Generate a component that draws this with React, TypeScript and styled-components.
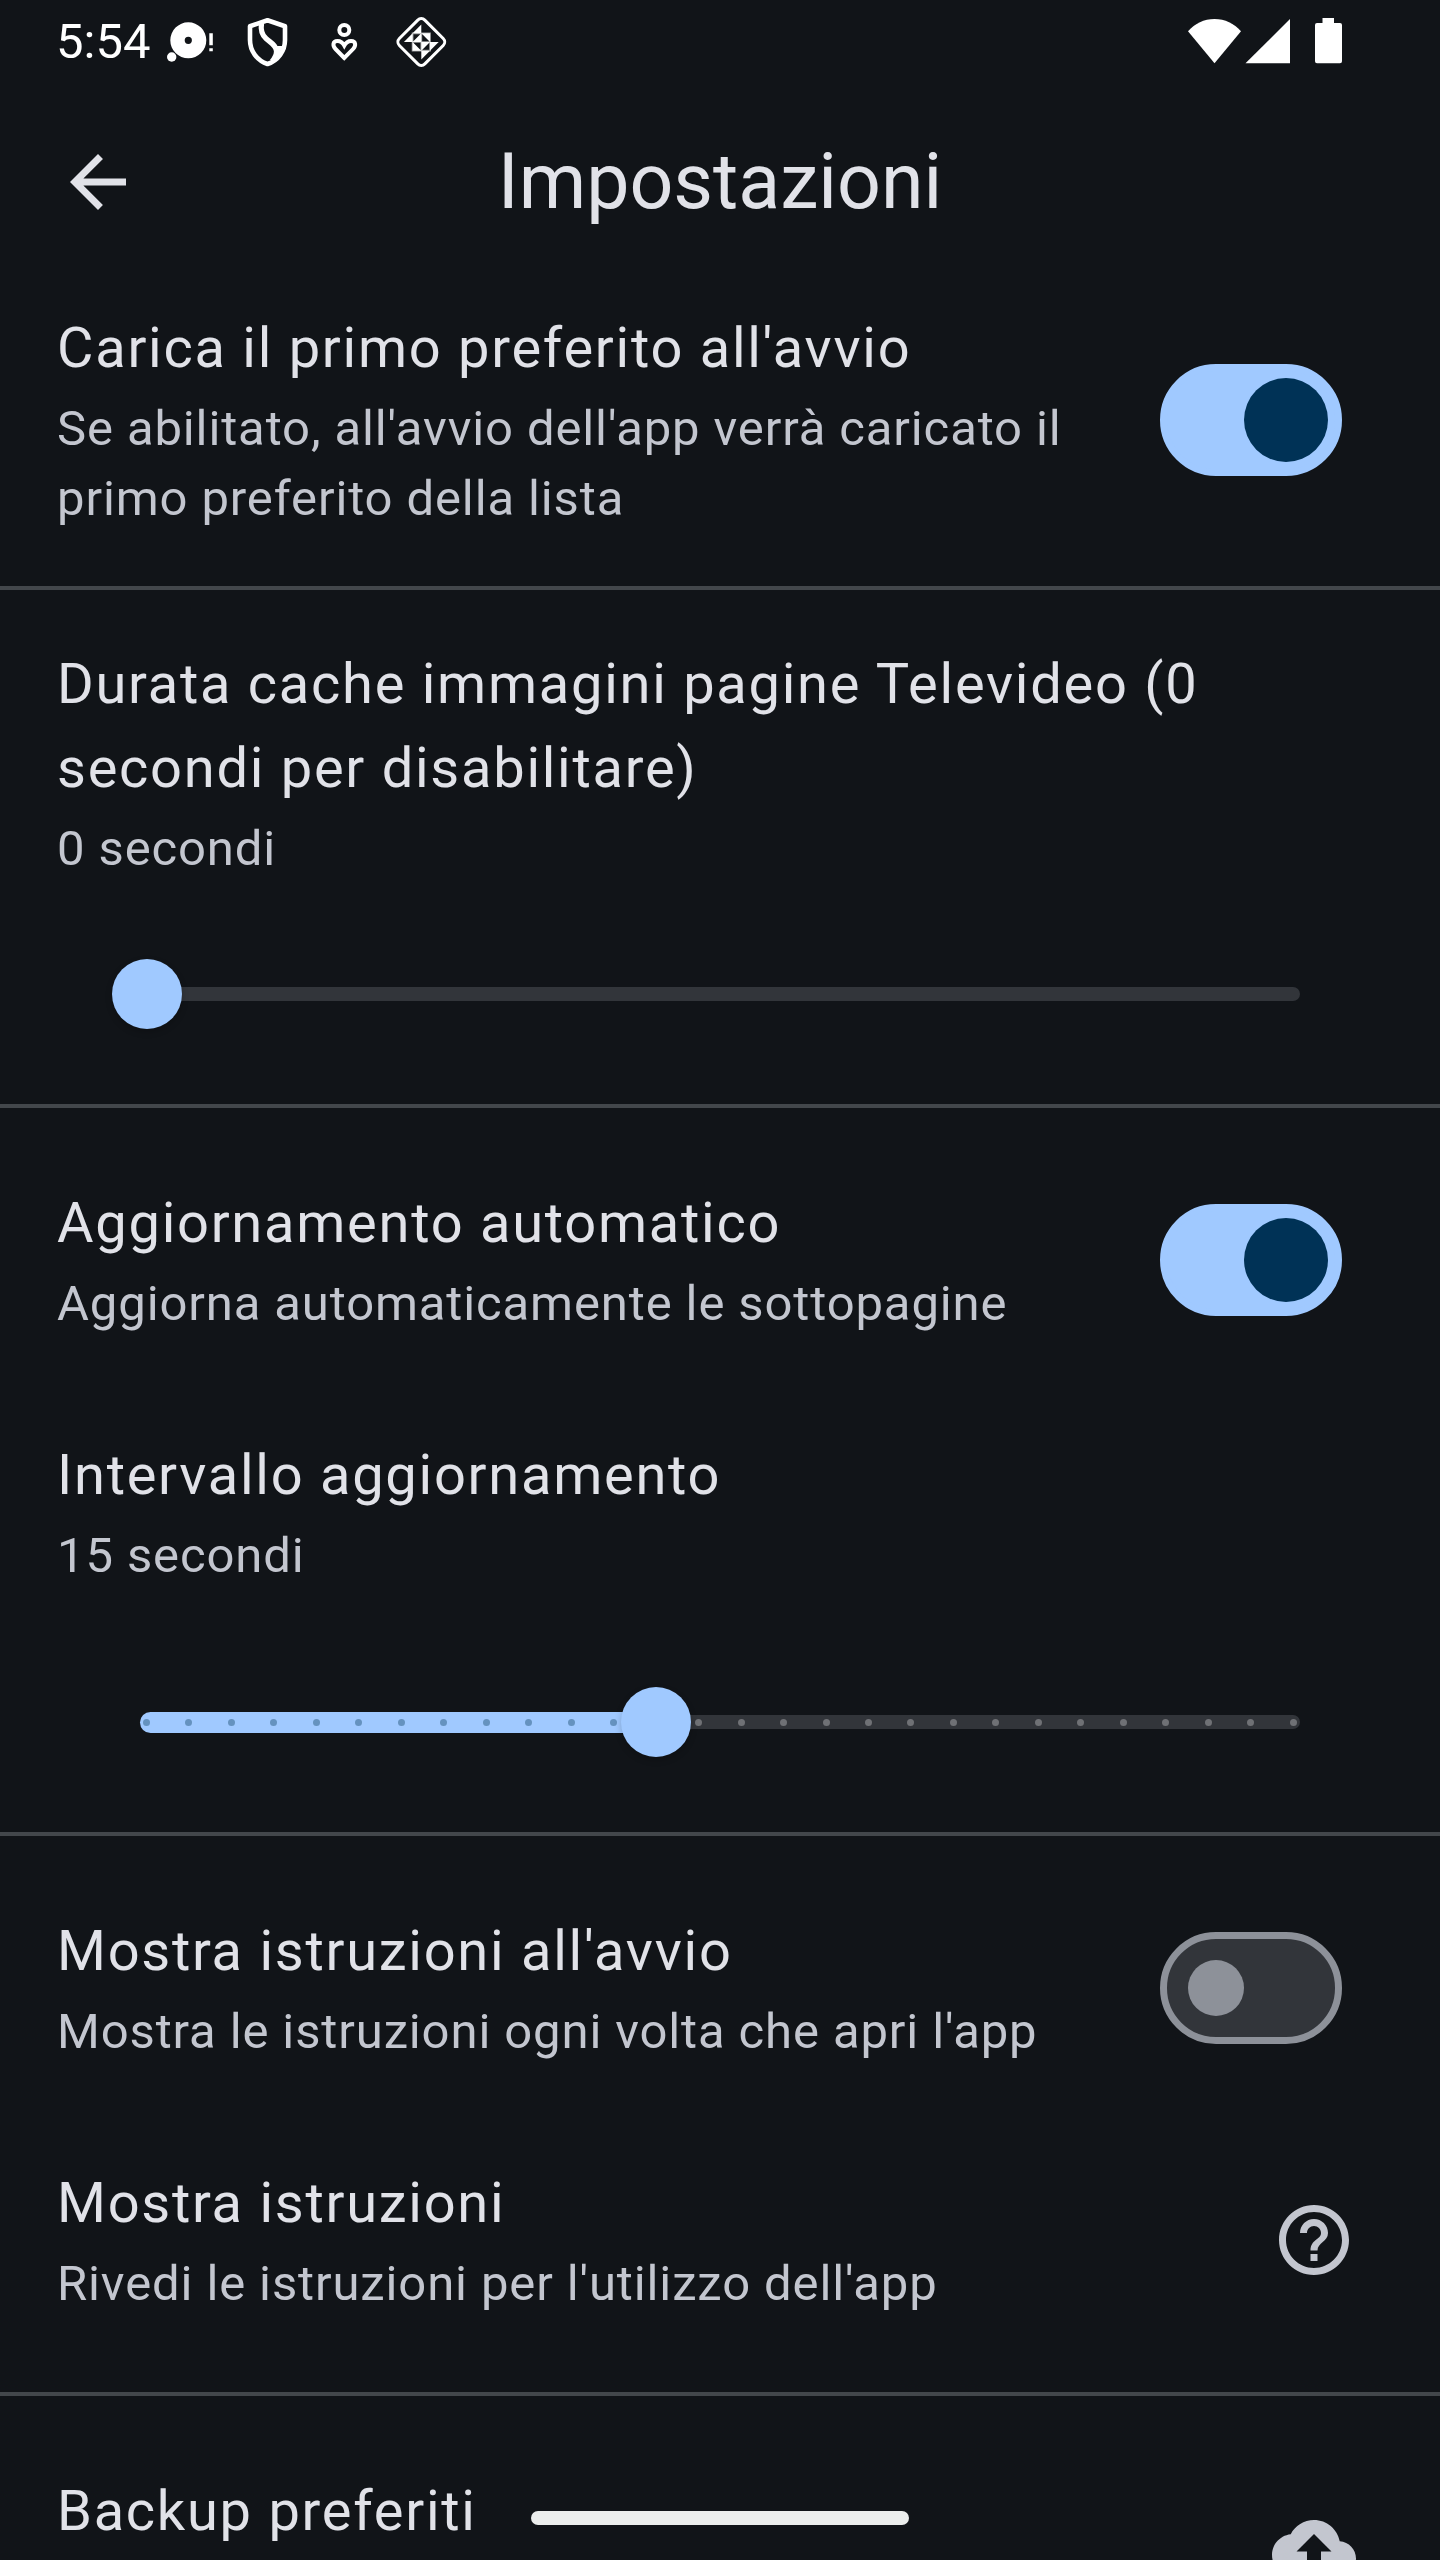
import React, { useState } from "react";
import styled, { createGlobalStyle, css } from "styled-components";

const colors = {
  surface: "#111418",
  onSurface: "#e1e2e8",
  onSurfaceVariant: "#c3c6cf",
  primary: "#a0c9ff",
  onPrimary: "#003256",
  outline: "#8d9199",
  outlineVariant: "#43474b",
  track: "#32353a",
  activeTick: "#6592bf",
  inactiveTick: "#6f7175",
};

const GlobalStyle = createGlobalStyle`
  * { box-sizing: border-box; }
  body {
    margin: 0;
    background: ${colors.surface};
    color: ${colors.onSurface};
    font-family: Roboto, "Noto Sans", sans-serif;
  }
`;

const Screen = styled.div`
  height: 100vh;
  display: flex;
  flex-direction: column;
  overflow: hidden;
  position: relative;
`;

const StatusBar = styled.div`
  flex: none;
  height: 84px;
  padding: 0 98px 0 56px;
  display: flex;
  align-items: center;
  color: #fff;
  svg { display: block; flex: none; }
`;

const Clock = styled.time`
  width: 96px;
  font-size: 49px;
  line-height: 84px;
`;

const Spacer = styled.div`
  flex: 1;
`;

const AppBar = styled.header`
  flex: none;
  height: 196px;
  padding: 0 56px;
  display: grid;
  grid-template-columns: 1fr auto 1fr;
  align-items: center;
`;

const BackButton = styled.button`
  justify-self: start;
  padding: 0;
  border: 0;
  background: none;
  color: inherit;
  cursor: pointer;
  svg { display: block; }
`;

const Title = styled.h1`
  margin: 0;
  font-size: 77px;
  line-height: 98px;
  font-weight: 400;
`;

const Settings = styled.main`
  flex: 1;
  min-height: 0;
  overflow-y: auto;
  scrollbar-width: none;
`;

const Divider = styled.hr`
  margin: 26px 0;
  border: 0;
  height: 4px;
  background: ${colors.outlineVariant};
`;

const tile = css`
  width: 100%;
  min-height: 252px;
  padding: 26px 84px 26px 57px;
  display: flex;
  align-items: center;
  justify-content: space-between;
  gap: 56px;
`;

const tightTile = css`
  min-height: 0;
`;

const SwitchTile = styled.label<{ $tight?: boolean }>`
  ${tile}
  ${(p) => p.$tight && tightTile}
  cursor: pointer;
`;

const LabelTile = styled.label<{ $tight?: boolean }>`
  ${tile}
  ${(p) => p.$tight && tightTile}
`;

const ButtonTile = styled.button`
  ${tile}
  border: 0;
  background: none;
  color: inherit;
  font: inherit;
  text-align: left;
  cursor: pointer;
`;

const TileIcon = styled.svg`
  display: block;
  flex: none;
  color: ${colors.onSurfaceVariant};
`;

const TileText = styled.span`
  display: flex;
  flex-direction: column;
  gap: 4px;
`;

const Headline = styled.span`
  font-size: 56px;
  line-height: 84px;
  letter-spacing: 0.031em;
`;

const Supporting = styled.span`
  font-size: 49px;
  line-height: 70px;
  letter-spacing: 0.018em;
  color: ${colors.onSurfaceVariant};
`;

const Switch = styled.input`
  appearance: none;
  flex: none;
  width: 182px;
  height: 112px;
  margin: 0 14px;
  padding: 0 21px;
  display: flex;
  align-items: center;
  border: 7px solid ${colors.outline};
  border-radius: 56px;
  background: ${colors.track};
  cursor: pointer;

  &::before {
    content: "";
    width: 56px;
    height: 56px;
    border-radius: 50%;
    background: ${colors.outline};
  }

  &:checked {
    padding: 0 7px;
    justify-content: flex-end;
    border-color: ${colors.primary};
    background: ${colors.primary};
  }

  &:checked::before {
    width: 84px;
    height: 84px;
    background: ${colors.onPrimary};
  }
`;

const SliderBox = styled.div`
  display: grid;
  align-items: center;
  height: 168px;
  padding: 0 112px;

  > * { grid-area: 1 / 1; }
`;

const Track = styled.div`
  height: 14px;
  margin: 0 28px;
  border-radius: 7px;
  background: ${colors.track};
`;

const ActiveTrack = styled.div`
  height: 21px;
  margin: 0 28px;
  border-radius: 11px;
  background: ${colors.primary};
`;

const Ticks = styled.div`
  margin: 0 28px;
  padding: 0 3px;
  display: flex;
  justify-content: space-between;
`;

const Tick = styled.span<{ $active: boolean }>`
  width: 7px;
  height: 7px;
  border-radius: 50%;
  background: ${(p) => (p.$active ? colors.activeTick : colors.inactiveTick)};
`;

const Range = styled.input`
  appearance: none;
  width: 100%;
  height: 84px;
  margin: 0;
  background: transparent;
  cursor: pointer;
  z-index: 1;

  &::-webkit-slider-thumb {
    appearance: none;
    width: 70px;
    height: 70px;
    border: 0;
    border-radius: 50%;
    background: ${colors.primary};
    box-shadow: 0 3px 7px rgba(0, 0, 0, 0.2);
  }
`;

const HomeIndicator = styled.div`
  position: absolute;
  left: 50%;
  bottom: 35px;
  width: 378px;
  height: 14px;
  margin-left: -189px;
  border-radius: 7px;
  background: #eceeed;
`;

const NotificationIcons = () => (
  <>
    <svg width="77" height="84" viewBox="0 0 77 84" fill="currentColor" aria-hidden="true">
      <path
        fillRule="evenodd"
        d="M18.300 40.300a18 18 0 1 0 36 0a18 18 0 1 0 -36 0zM32.700 40.300a3.600 3.600 0 1 1 7.200 0a3.600 3.600 0 1 1 -7.200 0z"
      />
      <circle cx="19.700" cy="57" r="4.700" />
      <path d="M57.300 33.300h3.500v12h-3.500zM57.300 48.300h3.500v3h-3.500z" />
    </svg>
    <svg
      width="77"
      height="84"
      viewBox="0 0 77 84"
      fill="none"
      stroke="currentColor"
      strokeWidth="4.600"
      strokeLinejoin="round"
      aria-hidden="true"
    >
      <path d="M38.500 20.200L56 26.200V40C56 51 49 60.500 38.500 64C28 60.500 21 51 21 40V26.200z" />
      <path
        strokeWidth="5.200"
        d="M32.500 23.500C31.500 30 32.500 34.500 37 38.500C42 43 47.500 45.500 47.500 51.500C47.500 55 46 58 43 61.500"
      />
      <path d="M48 46L54 46L48 58z" fill="currentColor" stroke="none" />
    </svg>
    <svg width="77" height="84" viewBox="0 0 77 84" fill="none" stroke="currentColor" strokeWidth="4" aria-hidden="true">
      <circle cx="38.300" cy="30" r="5" />
      <path d="M38.300 58L29.500 49C26.500 45.800 26.500 41 31.500 40.900C35 40.900 37 43 38.300 45.500C39.600 43 41.600 40.900 45.100 40.900C50.100 41 50.100 45.800 47.100 49z" />
    </svg>
    <svg width="77" height="84" viewBox="0 0 77 84" fill="none" aria-hidden="true">
      <rect
        x="20.300"
        y="24"
        width="36"
        height="36"
        rx="5"
        stroke="currentColor"
        strokeWidth="3"
        transform="rotate(45 38.300 42)"
      />
      <g transform="translate(38.300 42) scale(8.700)">
        <path
          fill="currentColor"
          d="M0-2V-1H-1zM-2 0L-1-1V0zM1 0H2L1 1zM0 1H1L0 2zM0-1V0H-1zM0-1H1V0zM0 0H1L0 1zM-1 0V1H0z"
        />
        <path stroke="currentColor" strokeWidth="0.200" strokeOpacity="0.600" d="M-1-1H1V1H-1zM-1 0H1M0-1V1" />
      </g>
    </svg>
  </>
);

const SystemIcons = () => (
  <svg width="154" height="84" viewBox="0 0 154 84" fill="currentColor" aria-hidden="true">
    <path d="M26.500 63.300L0 31.300C7 23.500 16 19 26.500 19S46 23.500 53 31.300z" />
    <path d="M57.500 63.300L102 19V63.300z" />
    <path d="M134.500 18h11.500v5h6q2 0 2 2v36.300q0 2-2 2h-23q-2 0-2-2V25q0-2 2-2h5.500z" />
  </svg>
);

interface SwitchSettingProps {
  title: string;
  detail: string;
  initial: boolean;
  tight?: boolean;
}

const SwitchSetting = ({ title, detail, initial, tight }: SwitchSettingProps) => {
  const [on, setOn] = useState(initial);
  return (
    <SwitchTile $tight={tight}>
      <TileText>
        <Headline>{title}</Headline>
        <Supporting>{detail}</Supporting>
      </TileText>
      <Switch type="checkbox" role="switch" checked={on} onChange={(e) => setOn(e.target.checked)} />
    </SwitchTile>
  );
};

interface SliderSettingProps {
  id: string;
  title: string;
  min: number;
  max: number;
  initial: number;
  ticks?: boolean;
  tight?: boolean;
}

const SliderSetting = ({ id, title, min, max, initial, ticks, tight }: SliderSettingProps) => {
  const [value, setValue] = useState(initial);
  const fraction = (value - min) / (max - min);
  const steps = Array.from({ length: max - min + 1 }, (_, i) => min + i);
  return (
    <>
      <LabelTile htmlFor={id} $tight={tight}>
        <TileText>
          <Headline>{title}</Headline>
          <Supporting>{value} secondi</Supporting>
        </TileText>
      </LabelTile>
      <SliderBox>
        <Track />
        {value > min && <ActiveTrack style={{ width: `calc((100% - 70px) * ${fraction} + 7px)` }} />}
        {ticks && (
          <Ticks>
            {steps.map((step) => (
              <Tick key={step} $active={step <= value} />
            ))}
          </Ticks>
        )}
        <Range
          id={id}
          type="range"
          min={min}
          max={max}
          value={value}
          onChange={(e) => setValue(Number(e.target.value))}
        />
      </SliderBox>
    </>
  );
};

export default function App() {
  return (
    <>
      <GlobalStyle />
      <Screen>
        <StatusBar>
          <Clock>5:54</Clock>
          <NotificationIcons />
          <Spacer />
          <SystemIcons />
        </StatusBar>
        <AppBar>
          <BackButton type="button" aria-label="Indietro">
            <svg width="84" height="84" viewBox="0 0 24 24" fill="currentColor" aria-hidden="true">
              <path d="M20 11H7.830l5.590-5.590L12 4l-8 8 8 8 1.410-1.410L7.830 13H20v-2z" />
            </svg>
          </BackButton>
          <Title>Impostazioni</Title>
        </AppBar>
        <Settings>
          <SwitchSetting
            tight
            title="Carica il primo preferito all'avvio"
            detail="Se abilitato, all'avvio dell'app verrà caricato il primo preferito della lista"
            initial
          />
          <Divider />
          <SliderSetting
            tight
            id="cache"
            title="Durata cache immagini pagine Televideo (0 secondi per disabilitare)"
            min={0}
            max={300}
            initial={0}
          />
          <Divider />
          <SwitchSetting
            title="Aggiornamento automatico"
            detail="Aggiorna automaticamente le sottopagine"
            initial
          />
          <SliderSetting id="intervallo" title="Intervallo aggiornamento" min={3} max={30} initial={15} ticks />
          <Divider />
          <SwitchSetting
            title="Mostra istruzioni all'avvio"
            detail="Mostra le istruzioni ogni volta che apri l'app"
            initial={false}
          />
          <ButtonTile type="button">
            <TileText>
              <Headline>Mostra istruzioni</Headline>
              <Supporting>Rivedi le istruzioni per l'utilizzo dell'app</Supporting>
            </TileText>
            <TileIcon width="84" height="84" viewBox="0 0 24 24" fill="currentColor" aria-hidden="true">
              <path d="M11 18h2v-2h-2v2zm1-16C6.480 2 2 6.480 2 12s4.480 10 10 10 10-4.480 10-10S17.520 2 12 2zm0 18c-4.410 0-8-3.590-8-8s3.590-8 8-8 8 3.590 8 8-3.590 8-8 8zm0-14c-2.210 0-4 1.790-4 4h2c0-1.100.9-2 2-2s2 .9 2 2c0 2-3 1.750-3 5h2c0-2.250 3-2.500 3-5 0-2.210-1.790-4-4-4z" />
            </TileIcon>
          </ButtonTile>
          <Divider />
          <ButtonTile type="button">
            <TileText>
              <Headline>Backup preferiti</Headline>
              <Supporting>&nbsp;</Supporting>
            </TileText>
            <TileIcon width="84" height="84" viewBox="0 0 24 24" fill="currentColor" aria-hidden="true">
              <path d="M19.350 10.040C18.670 6.590 15.640 4 12 4 9.110 4 6.600 5.640 5.350 8.040 2.340 8.360 0 10.910 0 14c0 3.310 2.690 6 6 6h13c2.760 0 5-2.240 5-5 0-2.640-2.050-4.780-4.650-4.960zM14 13v4h-4v-4H7l5-5 5 5h-3z" />
            </TileIcon>
          </ButtonTile>
        </Settings>
        <HomeIndicator />
      </Screen>
    </>
  );
}
